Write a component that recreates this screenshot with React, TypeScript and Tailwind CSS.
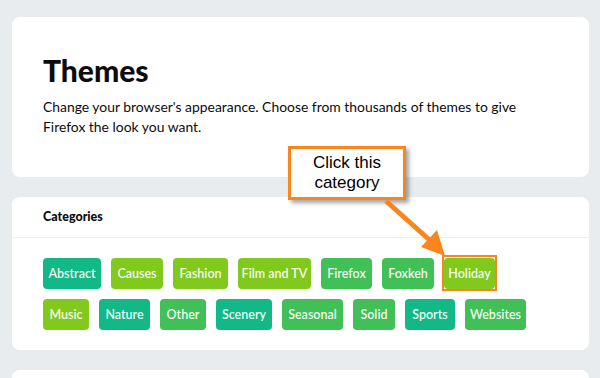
import React from "react";

type Cat = { label: string; color: string; w: string };

const TEAL = "bg-[#12b886]";
const LIME = "bg-[#82c91e]";
const GREEN = "bg-[#40c057]";

const row1: Cat[] = [
  { label: "Abstract", color: TEAL, w: "w-[58px]" },
  { label: "Causes", color: LIME, w: "w-[52px]" },
  { label: "Fashion", color: LIME, w: "w-[55px]" },
  { label: "Film and TV", color: LIME, w: "w-[73px]" },
  { label: "Firefox", color: GREEN, w: "w-[51px]" },
  { label: "Foxkeh", color: GREEN, w: "w-[52px]" },
  { label: "Holiday", color: LIME, w: "w-[51px]" },
];

const row2: Cat[] = [
  { label: "Music", color: LIME, w: "w-[46px]" },
  { label: "Nature", color: TEAL, w: "w-[51px]" },
  { label: "Other", color: GREEN, w: "w-[46px]" },
  { label: "Scenery", color: TEAL, w: "w-[56px]" },
  { label: "Seasonal", color: GREEN, w: "w-[61px]" },
  { label: "Solid", color: GREEN, w: "w-[42px]" },
  { label: "Sports", color: TEAL, w: "w-[50px]" },
  { label: "Websites", color: GREEN, w: "w-[61px]" },
];

function Chip({ c, highlight }: { c: Cat; highlight?: boolean }) {
  return (
    <div className={`relative ${c.w} h-[31px]`}>
      <div
        className={`${c.color} h-full w-full rounded-[4px] flex items-center justify-center pt-[1px] text-[12.5px] font-semibold text-white/95`}
      >
        {c.label}
      </div>
      {highlight && (
        <div className="absolute -left-[2px] -right-[2px] -top-[3px] -bottom-[2px] border-2 border-[#f7861e]" />
      )}
    </div>
  );
}

export default function App() {
  return (
    <div
      className="relative h-screen bg-[#e9ecef] pl-[12px] pr-[11px] pt-[17px] overflow-hidden"
      style={{ fontFamily: 'Lato, "Noto Sans", sans-serif' }}
    >
      <div className="flex flex-col gap-[20px]">
        <section className="bg-white rounded-lg h-[160px] px-[31px] pt-[36px]">
          <h1 className="text-[30px] leading-[35px] font-black text-[#0c0c0d]">
            Themes
          </h1>
          <p className="mt-[9px] text-[13.9px] leading-[20px] text-[#0c0c0d] max-w-[500px]">
            Change your browser's appearance. Choose from thousands of themes to give Firefox the look you want.
          </p>
        </section>

        <section className="bg-white rounded-lg">
          <div className="h-[41px] flex items-center px-[31px] border-b border-[#eef0f2]">
            <h2 className="text-[12.5px] font-black text-[#0c0c0d]">Categories</h2>
          </div>
          <div className="px-[31px] pt-[20px] pb-[20px] flex flex-col gap-[10px]">
            <div className="flex gap-[10px]">
              {row1.map((c) => (
                <Chip key={c.label} c={c} highlight={c.label === "Holiday"} />
              ))}
            </div>
            <div className="flex gap-[10px]">
              {row2.map((c) => (
                <Chip key={c.label} c={c} />
              ))}
            </div>
          </div>
        </section>

        <section className="bg-white rounded-lg h-[60px]" />
      </div>

      {/* Callout */}
      <div
        className="absolute left-[288px] top-[146px] w-[118px] h-[54px] bg-white border-[3px] border-[#f7861e] shadow-[3px_3px_4px_rgba(0,0,0,0.35)] flex flex-col items-center justify-center text-[17px] leading-[20px] text-black"
        style={{ fontFamily: '"Liberation Sans", Arial, sans-serif' }}
      >
        <span>Click this</span>
        <span>category</span>
      </div>

      <svg
        className="absolute left-[370px] top-[190px]"
        width="90"
        height="75"
        viewBox="370 190 90 75"
      >
        <line x1="386" y1="201" x2="434" y2="244" stroke="#f7861e" strokeWidth="5" />
        <polygon points="445,256 421,247 437,230" fill="#f7861e" />
      </svg>
    </div>
  );
}
